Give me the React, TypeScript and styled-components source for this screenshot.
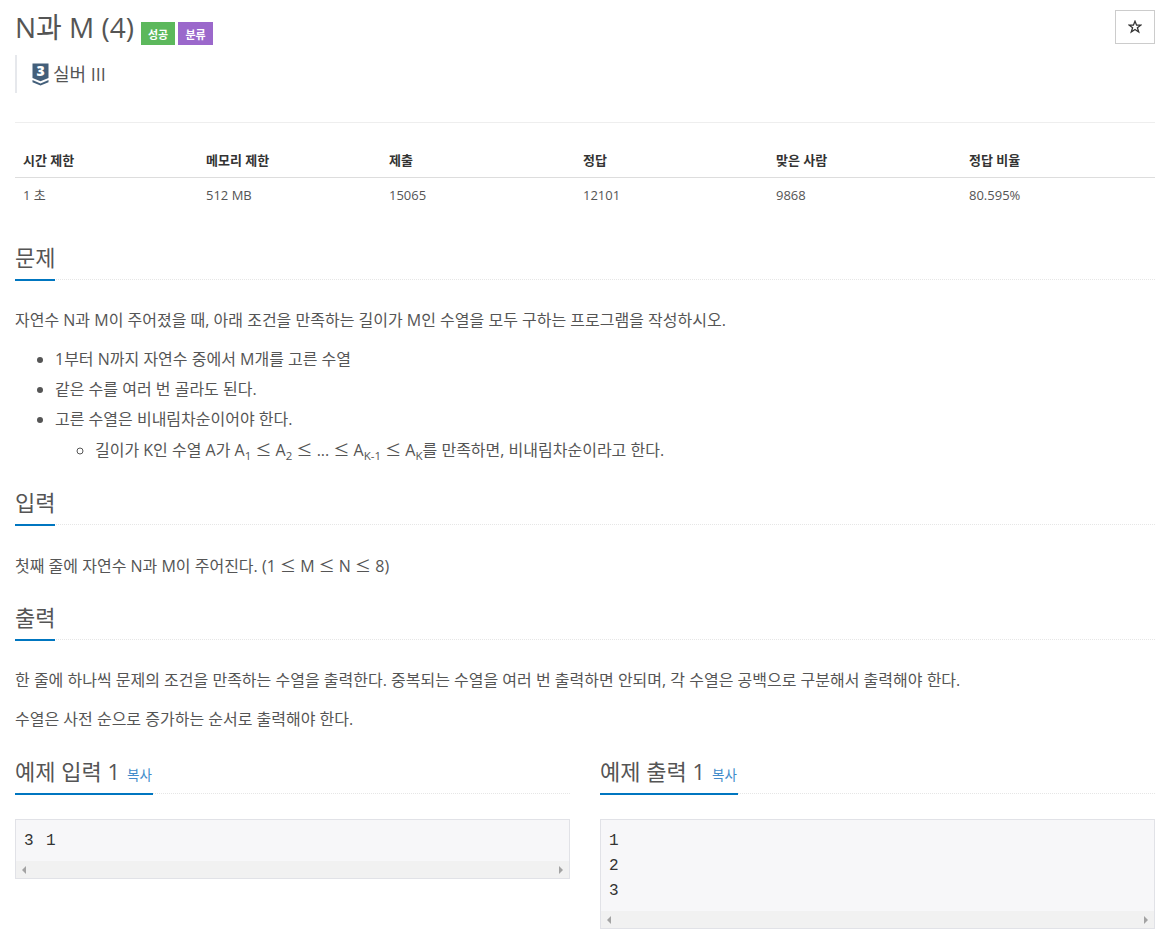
import React from "react";
import styled, { createGlobalStyle } from "styled-components";

const GlobalStyle = createGlobalStyle`
  html, body {
    margin: 0;
    padding: 0;
    background: #fff;
  }
  body {
    font-family: "Open Sans", "Noto Sans CJK KR", sans-serif;
    font-size: 14px;
    color: #555;
  }
  * {
    box-sizing: border-box;
  }
`;

const Page = styled.div`
  padding: 0 12px 0 15px;
  width: 1167px;
`;
const TitleRow = styled.div`
  display: flex;
  justify-content: space-between;
  align-items: flex-start;
  padding-top: 10px;
`;
const TitleLeft = styled.div`
  display: flex;
  align-items: center;
  gap: 3px;
  height: 36px;
`;
const Title = styled.h1`
  margin: -2px 4px 0 0;
  font-size: 28px;
  font-weight: 400;
  line-height: 36px;
  color: #555;
`;
const Label = styled.span<{ $bg: string; $w: number }>`
  display: inline-flex;
  align-items: center;
  justify-content: center;
  width: ${(p) => p.$w}px;
  height: 23px;
  margin-top: 11px;
  background: ${(p) => p.$bg};
  color: #fff;
  font-size: 11px;
  font-weight: 700;
`;
const StarButton = styled.button`
  width: 40px;
  height: 34px;
  border: 1px solid #ccc;
  background: #fff;
  color: #333;
  padding: 0 1px 1px 0;
  display: flex;
  align-items: center;
  justify-content: center;
`;
const Tier = styled.div`
  display: flex;
  align-items: center;
  gap: 4px;
  height: 38px;
  margin-top: 9px;
  padding-left: 15px;
  border-left: 2px solid #e6e8ec;
  font-size: 18px;
  line-height: 38px;
  color: #555;
`;
const Badge = styled.span`
  position: relative;
  display: inline-flex;
  width: 17px;
  height: 23px;
`;
const BadgeDigit = styled.span`
  position: absolute;
  top: 0;
  left: 0;
  width: 17px;
  text-align: center;
  font-size: 14px;
  line-height: 16px;
  font-weight: 800;
  color: #fff;
`;
const Rule = styled.hr`
  border: 0;
  border-top: 1px solid #eee;
  margin: 29px 0 0;
`;
const InfoTable = styled.table`
  width: 100%;
  margin: 19px 0 0;
  border-collapse: collapse;
  table-layout: fixed;
  font-size: 13px;
`;
const Th = styled.th<{ $w: number }>`
  width: ${(p) => p.$w}px;
  height: 35px;
  padding: 0 8px;
  text-align: left;
  font-weight: 700;
  color: #333;
  border-bottom: 1px solid #ddd;
`;
const Td = styled.td`
  height: 35px;
  padding: 0 8px;
  color: #555;
`;
const Section = styled.section`
  margin-top: 27px;
  &:first-of-type {
    margin-top: 31px;
  }
`;
const Heading = styled.div`
  height: 37px;
  border-bottom: 1px dotted #e6e6e6;
  display: flex;
  align-items: flex-start;
`;
const HeadingText = styled.h2`
  margin: 0;
  height: 36px;
  display: inline-flex;
  align-items: baseline;
  gap: 7px;
  font-size: 22px;
  font-weight: 400;
  line-height: 28px;
  color: #555;
  border-bottom: 2px solid #0076c0;
  box-sizing: content-box;
`;
const CopyLink = styled.a`
  font-size: 13.5px;
  color: #428bca;
  padding-right: 1px;
`;
const Paragraph = styled.p`
  margin: 0;
  font-size: 16px;
  line-height: 20px;
  color: #555;
`;
const Leq = styled.span`
  font-family: "Noto Sans CJK KR", sans-serif;
`;
const Body = styled.div`
  padding-top: 30px;
  display: flex;
  flex-direction: column;
  gap: 19px;
`;
const List = styled.ul`
  margin: -5px 0 -4px;
  padding-left: 40px;
  line-height: 30px;
  font-size: 16px;
  ul {
    padding-left: 40px;
  }
  sub {
    font-size: 11.5px;
    line-height: 0;
  }
`;
const Samples = styled.div`
  display: grid;
  grid-template-columns: 555px 555px;
  column-gap: 30px;
  margin-top: 28px;
`;
const Pre = styled.div`
  margin-top: 25px;
  border: 1px solid #e1e2e7;
  background: #f7f7f9;
  font-family: "Liberation Mono", monospace;
  font-size: 16px;
  letter-spacing: 1.4px;
  line-height: 25px;
  color: #333;
`;
const PreText = styled.pre`
  margin: 0;
  padding: 9px 8px 7px;
  font: inherit;
`;
const ScrollBar = styled.div`
  height: 17px;
  background: #f1f1f1;
  display: flex;
  justify-content: space-between;
  align-items: center;
  padding: 0 6px;
`;
const Arrow = styled.span<{ $right?: boolean }>`
  width: 0;
  height: 0;
  border-top: 4px solid transparent;
  border-bottom: 4px solid transparent;
  ${(p) =>
    p.$right ? "border-left: 4px solid #a3a3a3;" : "border-right: 4px solid #a3a3a3;"}
`;

const columns: [string, string, number][] = [
  ["시간 제한", "1 초", 183],
  ["메모리 제한", "512 MB", 183],
  ["제출", "15065", 194],
  ["정답", "12101", 193],
  ["맞은 사람", "9868", 193],
  ["정답 비율", "80.595%", 194],
];

function TierIcon() {
  return (
    <Badge>
      <svg width="17" height="23" viewBox="0 0 17 23">
        <path d="M0.5 0.5h16v14.5l-8 3.2-8-3.2z" fill="#435f7a" />
        <path d="M0.5 17l8 3.4 8-3.4v2.2l-8 3.4-8-3.4z" fill="#435f7a" />
      </svg>
      <BadgeDigit>3</BadgeDigit>
    </Badge>
  );
}

function StarIcon() {
  return (
    <svg width="14" height="14" viewBox="0 0 14 14">
      <path
        d="M7 1.2l1.6 4h4.2l-3.4 2.6 1.3 4.2L7 9.5 3.300 12l1.300-4.200L1.200 5.200h4.200z"
        fill="none"
        stroke="#333"
        strokeWidth="1.300"
      />
    </svg>
  );
}

function Sample({ title, text }: { title: string; text: string }) {
  return (
    <div>
      <Heading>
        <HeadingText>
          {title} <CopyLink>복사</CopyLink>
        </HeadingText>
      </Heading>
      <Pre>
        <PreText>{text}</PreText>
        <ScrollBar>
          <Arrow />
          <Arrow $right />
        </ScrollBar>
      </Pre>
    </div>
  );
}

export default function App() {
  return (
    <Page>
      <GlobalStyle />
      <TitleRow>
        <TitleLeft>
          <Title>N과 M (4)</Title>
          <Label $bg="#5cb85c" $w={34}>성공</Label>
          <Label $bg="#9b68cb" $w={35}>분류</Label>
        </TitleLeft>
        <StarButton>
          <StarIcon />
        </StarButton>
      </TitleRow>
      <Tier>
        <TierIcon />
        실버 III
      </Tier>
      <Rule />
      <InfoTable>
        <thead>
          <tr>
            {columns.map((c) => (
              <Th key={c[0]} $w={c[2]}>
                {c[0]}
              </Th>
            ))}
          </tr>
        </thead>
        <tbody>
          <tr>
            {columns.map((c) => (
              <Td key={c[0]}>{c[1]}</Td>
            ))}
          </tr>
        </tbody>
      </InfoTable>
      <Section>
        <Heading>
          <HeadingText>문제</HeadingText>
        </Heading>
        <Body>
          <Paragraph>
            자연수 N과 M이 주어졌을 때, 아래 조건을 만족하는 길이가 M인 수열을 모두 구하는 프로그램을 작성하시오.
          </Paragraph>
          <List>
            <li>1부터 N까지 자연수 중에서 M개를 고른 수열</li>
            <li>같은 수를 여러 번 골라도 된다.</li>
            <li>
              고른 수열은 비내림차순이어야 한다.
              <ul>
                <li>
                  길이가 K인 수열 A가 A<sub>1</sub> <Leq>≤</Leq> A<sub>2</sub> <Leq>≤</Leq> ... <Leq>≤</Leq> A<sub>K-1</sub> <Leq>≤</Leq> A<sub>K</sub>를 만족하면, 비내림차순이라고 한다.
                </li>
              </ul>
            </li>
          </List>
        </Body>
      </Section>
      <Section>
        <Heading>
          <HeadingText>입력</HeadingText>
        </Heading>
        <Body>
          <Paragraph>
            첫째 줄에 자연수 N과 M이 주어진다. (1 <Leq>≤</Leq> M <Leq>≤</Leq> N <Leq>≤</Leq> 8)
          </Paragraph>
        </Body>
      </Section>
      <Section>
        <Heading>
          <HeadingText>출력</HeadingText>
        </Heading>
        <Body>
          <Paragraph>
            한 줄에 하나씩 문제의 조건을 만족하는 수열을 출력한다. 중복되는 수열을 여러 번 출력하면 안되며, 각 수열은 공백으로 구분해서 출력해야 한다.
          </Paragraph>
          <Paragraph>수열은 사전 순으로 증가하는 순서로 출력해야 한다.</Paragraph>
        </Body>
      </Section>
      <Samples>
        <Sample title="예제 입력 1" text="3 1" />
        <Sample title="예제 출력 1" text={"1\n2\n3"} />
      </Samples>
    </Page>
  );
}
